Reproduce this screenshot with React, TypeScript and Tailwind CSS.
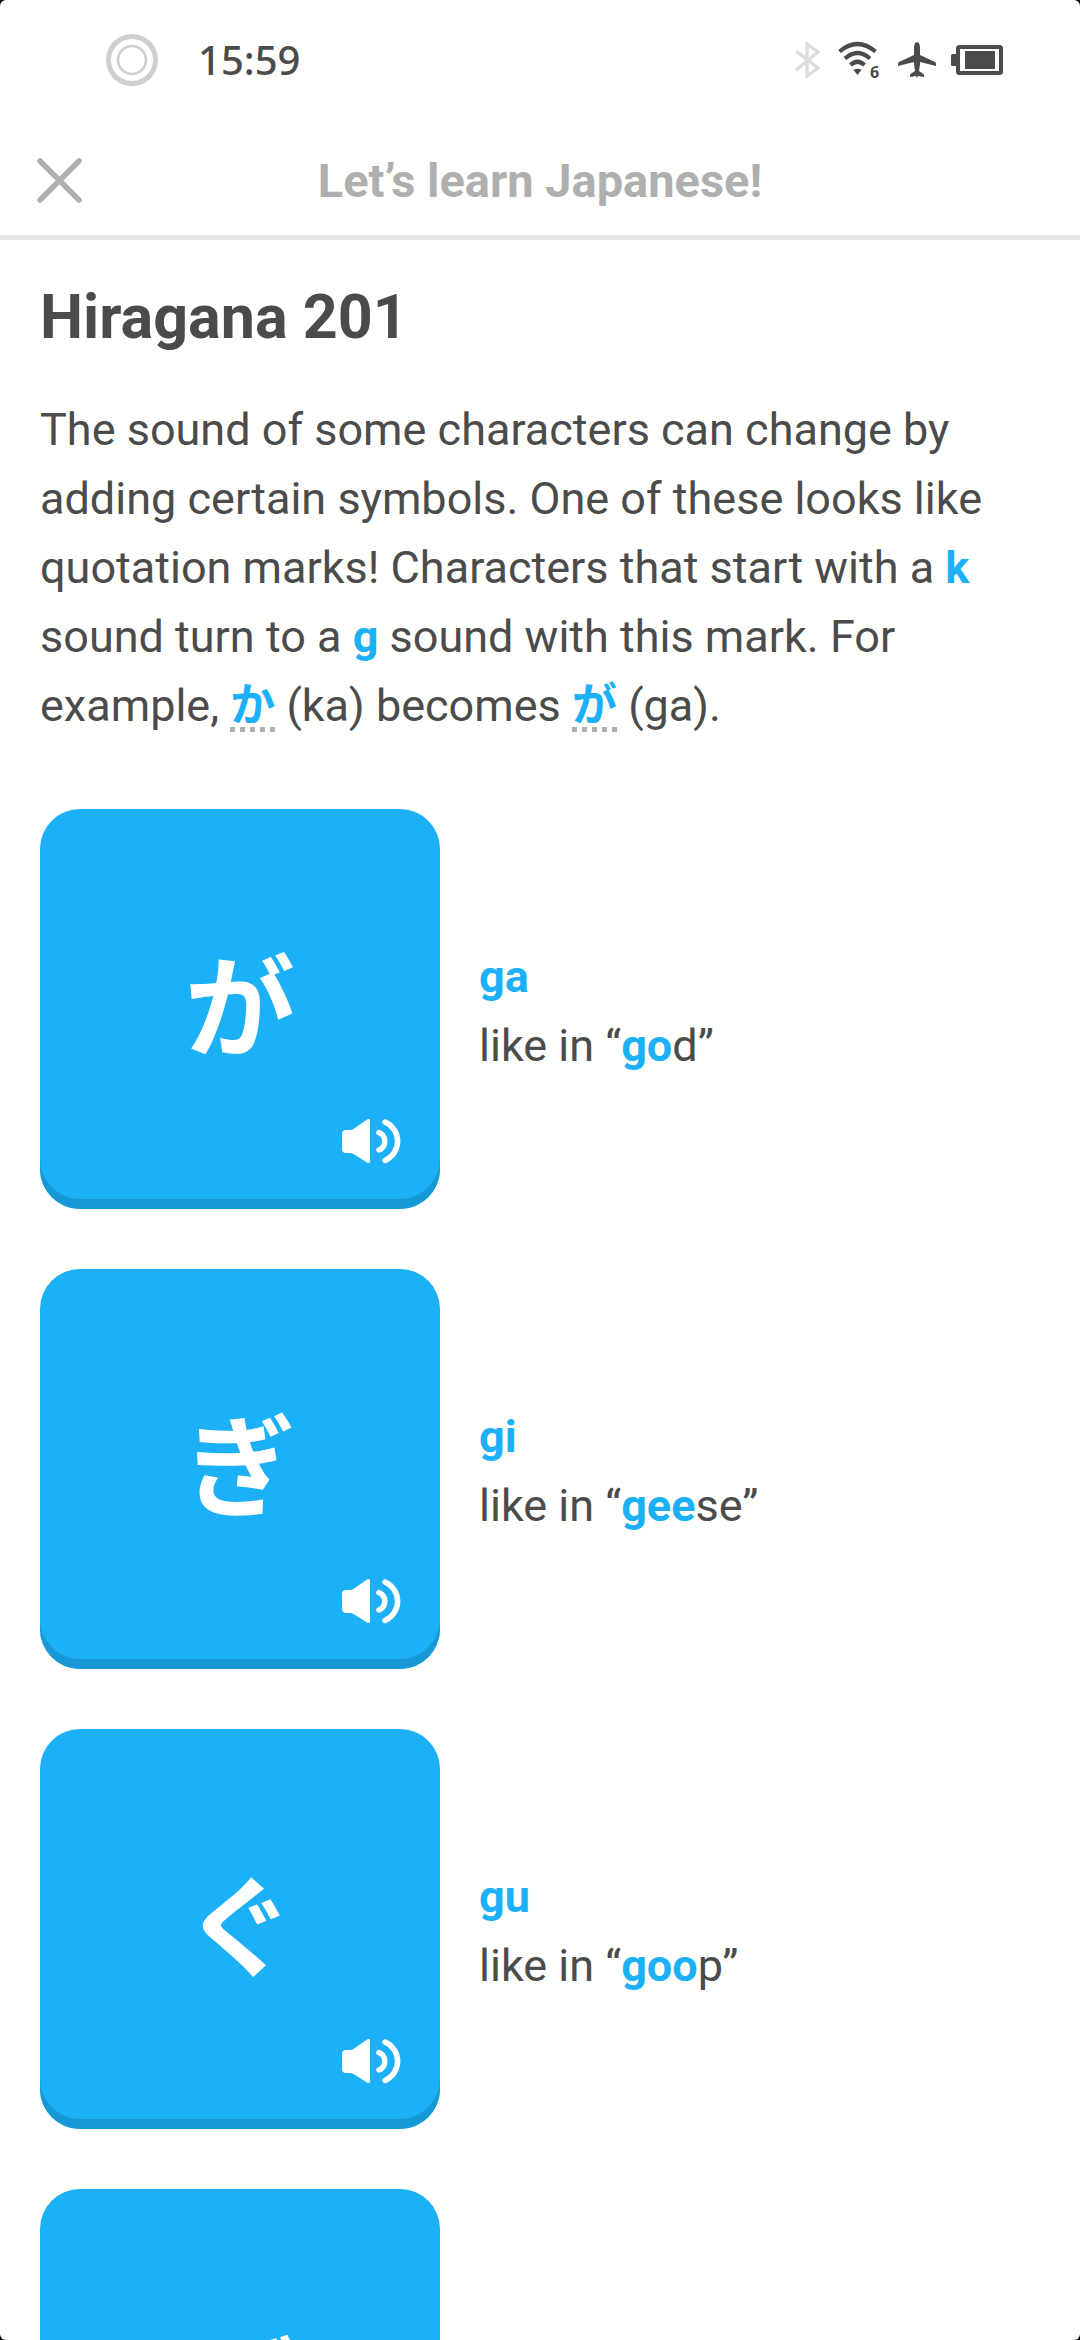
import type { ReactNode } from "react";

const LATIN = "font-['Roboto','Noto_Sans_CJK_JP',sans-serif]";

type Lesson = { kana: string; romaji: string; stress: string; rest: string };

const lessons: Lesson[] = [
  { kana: "が", romaji: "ga", stress: "go", rest: "d" },
  { kana: "ぎ", romaji: "gi", stress: "gee", rest: "se" },
  { kana: "ぐ", romaji: "gu", stress: "goo", rest: "p" },
  { kana: "げ", romaji: "ge", stress: "ge", rest: "t" },
];

function Accent({ children }: { children: ReactNode }) {
  return <strong className="font-bold text-[#1cb0f6]">{children}</strong>;
}

function Hint({ children }: { children: ReactNode }) {
  return (
    <button
      type="button"
      lang="ja"
      className="relative font-['Noto_Sans_CJK_JP',sans-serif] leading-none font-bold text-[#1cb0f6]"
    >
      {children}
      <svg viewBox="0 0 45 5" className="absolute -bottom-2 left-0 h-[5px] w-full" aria-hidden="true">
        <path d="M0 2.5H45" stroke="#afafaf" strokeWidth="5" strokeDasharray="5 5" />
      </svg>
    </button>
  );
}

function StatusBar() {
  return (
    <div className="flex h-[120px] shrink-0 items-center justify-between pr-[77px] pl-[106px] text-[#4b4b4b]">
      <div className="flex items-center gap-10">
        <svg viewBox="0 0 52 52" className="size-[52px]" fill="none" aria-hidden="true">
          <circle cx="26" cy="26" r="23.5" stroke="#cfcfcf" strokeWidth="5" />
          <circle cx="26" cy="26" r="14" stroke="#cfcfcf" strokeWidth="2.6" />
        </svg>
        <time className="font-['Noto_Sans',sans-serif] text-[40px] leading-none font-medium">15:59</time>
      </div>
      <div className="flex items-center">
        <svg viewBox="0 0 26 36" className="h-9 w-[26px]" fill="none" aria-label="Bluetooth" role="img">
          <path d="M2 9L24 26L13 34V2L24 10L2 28" stroke="#dcdcdc" strokeWidth="3.4" strokeLinejoin="miter" />
        </svg>
        <svg viewBox="0 0 44 42" className="mt-1 ml-[18px] h-[42px] w-[44px]" fill="none" aria-label="Wi-Fi" role="img">
          <g stroke="currentColor" strokeWidth="4.2">
            <path d="M1.5 10.5Q19.5 -4.5 37.5 10.5" />
            <path d="M7 17.5Q19.5 6.5 32 17.5" />
            <path d="M12.5 24Q19.5 17.5 26.5 24" />
          </g>
          <path d="M15.5 29Q19.5 26.5 23.5 29L19.5 34Z" fill="currentColor" />
          <text x="32" y="37" className="font-['Noto_Sans',sans-serif] text-[16px] font-bold" fill="currentColor">
            6
          </text>
        </svg>
        <svg viewBox="0 0 38 36" className="ml-4 h-9 w-[38px]" aria-label="Airplane mode" role="img">
          <path
            fill="currentColor"
            d="M19 0C17 0 16 3 16 6V13L1 20Q0 20.5 0 22V24L16 20V22L17 29L12.5 32Q11.5 33 12 35L18 34L19 36L20 34L26 35Q26.5 33 25.5 32L21 29L22 22V20L38 24V22Q38 20.5 37 20L22 13V6C22 3 21 0 19 0Z"
          />
        </svg>
        <svg viewBox="0 0 52 30" className="ml-[15px] h-[30px] w-[52px]" aria-label="Battery" role="img">
          <rect x="7" y="2" width="43" height="26" rx="1.5" fill="none" stroke="currentColor" strokeWidth="4" />
          <rect x="0" y="9" width="6" height="12" rx="1.5" fill="currentColor" />
          <rect x="14" y="6" width="30" height="18" fill="currentColor" />
        </svg>
      </div>
    </div>
  );
}

function SpeakerIcon() {
  return (
    <svg viewBox="0 0 60 46" className="h-[46px] w-[60px]" fill="none" aria-hidden="true">
      <path
        d="M5 12H9Q11 12 12.5 11L26 1.5Q29 0 29 3V43Q29 46 26 44.5L12.5 36Q11 35 9 35H5Q1 35 1 31V16Q1 12 5 12Z"
        fill="#fff"
      />
      <path d="M38 14.5A9.5 9.5 0 0 1 38 32" stroke="#fff" strokeWidth="5.5" strokeLinecap="round" />
      <path d="M44 4A21 21 0 0 1 44 42.5" stroke="#fff" strokeWidth="5.5" strokeLinecap="round" />
    </svg>
  );
}

function LessonRow({ kana, romaji, stress, rest }: Lesson) {
  return (
    <li className="flex items-center gap-[39px]">
      <button
        type="button"
        aria-label={`Play ${romaji}`}
        className="relative flex size-[400px] shrink-0 items-center justify-center rounded-[40px] bg-[#1cb0f6] pb-[18px] shadow-[inset_0_-10px_0_#1899d6]"
      >
        <span lang="ja" className="font-['Noto_Sans_CJK_JP',sans-serif] text-[110px] leading-none font-bold text-white">
          {kana}
        </span>
        <span className="absolute right-[39px] bottom-[45px]">
          <SpeakerIcon />
        </span>
      </button>
      <p className="pt-1">
        <Accent>{romaji}</Accent>
        <br />
        like in “<Accent>{stress}</Accent>
        {rest}”
      </p>
    </li>
  );
}

export default function App() {
  return (
    <div className="h-screen bg-black">
      <div className={`${LATIN} flex h-full flex-col overflow-hidden rounded-md bg-[#fffffd] text-[#4b4b4b]`}>
        <StatusBar />
        <header className="grid h-[120px] shrink-0 grid-cols-[1fr_auto_1fr] items-center border-b-[5px] border-[#e5e5e5] px-9 pt-1.5">
          <button type="button" aria-label="Close" className="size-12">
            <svg viewBox="0 0 48 48" className="size-12" fill="none" aria-hidden="true">
              <path d="M4 4L43 43M43 4L4 43" stroke="#afafaf" strokeWidth="5.5" strokeLinecap="round" />
            </svg>
          </button>
          <p className="text-[47px] leading-none font-bold text-[#afafaf]">Let’s learn Japanese!</p>
        </header>
        <main className="min-h-0 flex-1 overflow-y-auto px-10 pt-10 text-[45px] leading-[69px] [scrollbar-width:none]">
          <h1 className="text-[61px] leading-[74px] font-bold">Hiragana 201</h1>
          <p className="mt-[41px]">
            The sound of some characters can change by adding certain symbols. One of these looks like quotation
            marks! Characters that start with a <Accent>k</Accent> sound turn to a <Accent>g</Accent> sound with this
            mark. For example, <Hint>か</Hint> (ka) becomes <Hint>が</Hint> (ga).
          </p>
          <ul className="mt-[69px] flex flex-col gap-[60px]">
            {lessons.map((lesson) => (
              <LessonRow key={lesson.kana} {...lesson} />
            ))}
          </ul>
        </main>
      </div>
    </div>
  );
}
